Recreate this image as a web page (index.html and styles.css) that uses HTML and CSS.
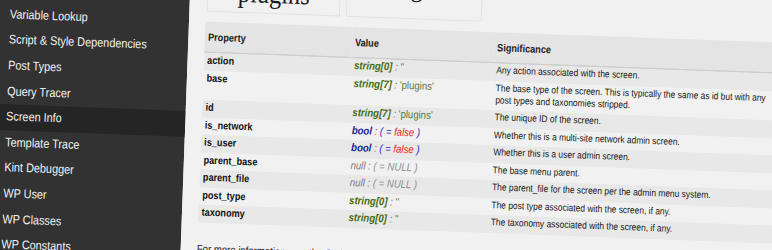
FILE: index.html
```html
<!DOCTYPE html>
<html lang="en">

<head>
    <meta charset="UTF-8">
    <title>Screen Info</title>
    <link rel="stylesheet" href="styles.css">
</head>

<body>

    <div class="stage">

        <!-- debug menu -->
        <aside class="menu">
            <div class="menu-item">Variable Lookup</div>
            <div class="menu-item">Script &amp; Style Dependencies</div>
            <div class="menu-item">Post Types</div>
            <div class="menu-item">Query Tracer</div>
            <div class="menu-item active">Screen Info</div>
            <div class="menu-item">Template Trace</div>
            <div class="menu-item">Kint Debugger</div>
            <div class="menu-item">WP User</div>
            <div class="menu-item">WP Classes</div>
            <div class="menu-item">WP Constants</div>
            <div class="menu-item">WP Globals</div>
        </aside>

        <main class="content">
            <div class="titles">
                <div class="title-box">plugins</div>
                <div class="title-box wide">Pages</div>
            </div>

            <table class="info">
                <colgroup>
                    <col class="col-prop">
                    <col class="col-value">
                    <col class="col-sig">
                </colgroup>
                <thead>
                    <tr>
                        <th>Property</th>
                        <th>Value</th>
                        <th>Significance</th>
                    </tr>
                </thead>
                <tbody>
                    <tr>
                        <td class="prop">action</td>
                        <td><span class="t-str">string[0]</span> <span class="sep">:</span> <span class="v-str">''</span></td>
                        <td>Any action associated with the screen.</td>
                    </tr>
                    <tr>
                        <td class="prop">base</td>
                        <td><span class="t-str">string[7]</span> <span class="sep">:</span> <span class="v-str">'plugins'</span></td>
                        <td>The base type of the screen. This is typically the same as id but with any post types and taxonomies stripped.</td>
                    </tr>
                    <tr>
                        <td class="prop">id</td>
                        <td><span class="t-str">string[7]</span> <span class="sep">:</span> <span class="v-str">'plugins'</span></td>
                        <td>The unique ID of the screen.</td>
                    </tr>
                    <tr>
                        <td class="prop">is_network</td>
                        <td><span class="t-bool">bool</span> <span class="sep">:</span> <span class="v-bool">( = <em class="false">false</em> )</span></td>
                        <td>Whether this is a multi-site network admin screen.</td>
                    </tr>
                    <tr>
                        <td class="prop">is_user</td>
                        <td><span class="t-bool">bool</span> <span class="sep">:</span> <span class="v-bool">( = <em class="false">false</em> )</span></td>
                        <td>Whether this is a user admin screen.</td>
                    </tr>
                    <tr>
                        <td class="prop">parent_base</td>
                        <td><span class="t-null">null</span> <span class="sep">:</span> <span class="v-null">( = NULL )</span></td>
                        <td>The base menu parent.</td>
                    </tr>
                    <tr>
                        <td class="prop">parent_file</td>
                        <td><span class="t-null">null</span> <span class="sep">:</span> <span class="v-null">( = NULL )</span></td>
                        <td>The parent_file for the screen per the admin menu system.</td>
                    </tr>
                    <tr>
                        <td class="prop">post_type</td>
                        <td><span class="t-str">string[0]</span> <span class="sep">:</span> <span class="v-str">''</span></td>
                        <td>The post type associated with the screen, if any.</td>
                    </tr>
                    <tr>
                        <td class="prop">taxonomy</td>
                        <td><span class="t-str">string[0]</span> <span class="sep">:</span> <span class="v-str">''</span></td>
                        <td>The taxonomy associated with the screen, if any.</td>
                    </tr>
                </tbody>
            </table>

            <p class="more">For more information, see the <a href="#">Codex page on the WP_Screen class</a>.</p>
        </main>

    </div>

</body>

</html>
```

FILE: styles.css
```css
html,
body {
    margin: 0;
    overflow: hidden;
}

body {
    background: #f1f1f1;
    font-family: "Liberation Sans", Arial, sans-serif;
}

/* the whole page is a tilted, squeezed screenshot */
.stage {
    display: flex;
    width: 950px;
    height: 340px;
    margin: -40px 0 0 -10px;
    transform-origin: 10px 40px;
    transform: rotate(2.1deg) scaleX(0.87);
}

.menu {
    flex: none;
    width: 228px;
    padding-top: 41.8px;
    background: #323232;
}

.menu-item {
    height: 25.6px;
    line-height: 25.6px;
    padding-left: 22px;
    font-size: 12.5px;
    color: #f2f2f2;
    white-space: nowrap;
}

.menu-item.active {
    background: #252525;
}

.content {
    flex: 1;
    padding-left: 18.6px;
    background: #f1f1f1;
}

.titles {
    display: flex;
    align-items: flex-end;
    gap: 7px;
    margin: -3px 0 10px 1.4px;
}

.title-box {
    width: 151px;
    padding: 6px 0 5px;
    border: 1px solid #e2e2e2;
    font-family: "Liberation Serif", "Times New Roman", serif;
    font-size: 28px;
    line-height: 28px;
    text-align: center;
    color: #1a1a1a;
}

.title-box.wide {
    width: 154px;
    padding: 0 0 17.4px;
}

.info {
    width: 668.5px;
    border-collapse: collapse;
    table-layout: fixed;
    color: #1a1a1a;
}

.col-prop {
    width: 169px;
}

.col-value {
    width: 163.5px;
}

.col-sig {
    width: 336px;
}

.info th {
    height: 30px;
    padding: 0 4px;
    text-align: left;
    font-size: 10.5px;
    background: #e4e4e4;
    border-bottom: 1px solid #cdcdcd;
}

.info td {
    padding: 1px 4px 4.5px;
    line-height: 12px;
    vertical-align: top;
    font-size: 9.7px;
}

.info tbody tr:nth-child(odd) {
    background: #e8e8e8;
}

.info td.prop {
    font-size: 10.5px;
    font-weight: bold;
    color: #111;
}

.info td:nth-child(2) {
    font-size: 11px;
    font-style: italic;
}

.t-str {
    font-weight: bold;
    color: #456a10;
}

.v-str {
    font-style: normal;
    color: #587a35;
}

.sep {
    color: #666;
}

.t-bool {
    font-weight: bold;
    color: #1c1c96;
}

.v-bool {
    color: #2a2ab8;
}

.false {
    color: #f01c1c;
}

.t-null {
    color: #7c7c7c;
}

.v-null {
    color: #8e8e8e;
}

.more {
    margin: 19.5px 0 0;
    font-size: 11px;
    line-height: 14px;
    color: #1a1a1a;
}

.more a {
    color: #2450d0;
    text-decoration: none;
}
```
